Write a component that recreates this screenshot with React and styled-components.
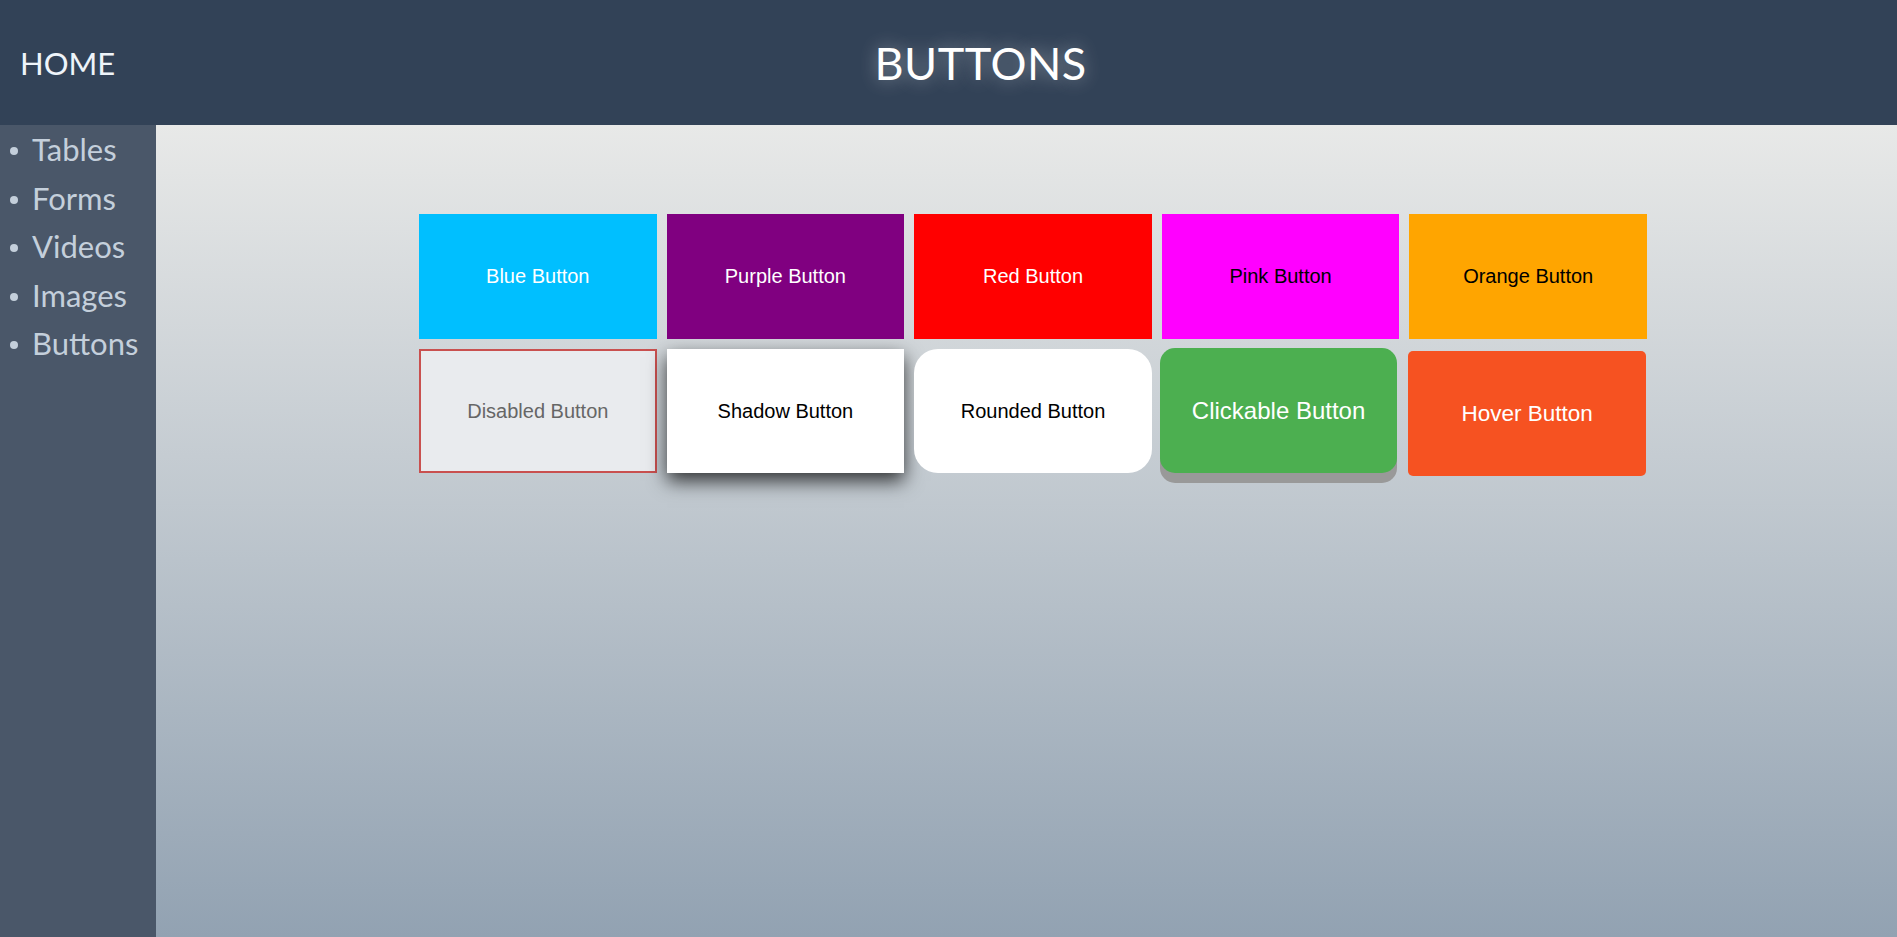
import styled, { createGlobalStyle } from "styled-components";

const GlobalStyle = createGlobalStyle`
  html, body {
    margin: 0;
    padding: 0;
  }
  body {
    font-family: "Trebuchet MS", Lato, "Open Sans", sans-serif;
  }
`;

const links = ["Tables", "Forms", "Videos", "Images", "Buttons"];

const buttons = [
  { label: "Blue Button", bg: "#00bfff", color: "#fff" },
  { label: "Purple Button", bg: "#800080", color: "#fff" },
  { label: "Red Button", bg: "#ff0000", color: "#fff" },
  { label: "Pink Button", bg: "#ff00ff", color: "#000" },
  { label: "Orange Button", bg: "#ffa500", color: "#000" },
];

export default function App() {
  return (
    <>
      <GlobalStyle />
      <Page>
        <Header>
          <HomeLink>HOME</HomeLink>
          <Title>BUTTONS</Title>
        </Header>
        <Body>
          <Sidebar>
            <NavList>
              {links.map((l) => (
                <NavItem key={l}>{l}</NavItem>
              ))}
            </NavList>
          </Sidebar>
          <Main>
            <ButtonGrid>
              {buttons.map((b) => (
                <PlainButton key={b.label} $bg={b.bg} $color={b.color}>
                  {b.label}
                </PlainButton>
              ))}
              <DisabledButton disabled>Disabled Button</DisabledButton>
              <ShadowButton>Shadow Button</ShadowButton>
              <RoundedButton>Rounded Button</RoundedButton>
              <ClickableButton>Clickable Button</ClickableButton>
              <HoverButton>Hover Button</HoverButton>
            </ButtonGrid>
          </Main>
        </Body>
      </Page>
    </>
  );
}

const Page = styled.div`
  display: flex;
  flex-direction: column;
  min-height: 100vh;
`;

const Header = styled.header`
  height: 125px;
  background: #324257;
  display: flex;
  align-items: center;
  color: #fff;
`;

const HomeLink = styled.a`
  padding-left: 20px;
  font-size: 31px;
  color: #eef4fa;
  text-decoration: none;
`;

const Title = styled.h1`
  flex: 1;
  margin: 0;
  padding-right: 51px;
  text-align: center;
  font-weight: normal;
  font-size: 45px;
  letter-spacing: 0.5px;
  color: #fff;
  text-shadow: 0 0 18px rgba(255, 255, 255, 0.45);
`;

const Body = styled.div`
  flex: 1;
  display: flex;
`;

const Sidebar = styled.nav`
  width: 156px;
  flex-shrink: 0;
  background: #4a5769;
`;

const NavList = styled.ul`
  margin: 0;
  padding: 0 0 0 10px;
  list-style: none;
  color: #c4cfdb;
`;

const NavItem = styled.li`
  display: flex;
  align-items: center;
  gap: 14px;
  font-size: 31px;
  line-height: 48.5px;

  &::before {
    content: "";
    width: 8px;
    height: 8px;
    margin-top: 4px;
    border-radius: 50%;
    background: #c4cfdb;
  }
`;

const Main = styled.main`
  flex: 1;
  background: linear-gradient(to bottom, #e8e9e8, #92a2b2);
  padding: 89px 0 0 263px;
`;

const ButtonGrid = styled.div`
  display: grid;
  grid-template-columns: repeat(5, 237.6px);
  grid-auto-rows: 125px;
  gap: 10px;
`;

const BaseButton = styled.button`
  border: none;
  margin: 0;
  padding: 0;
  width: 100%;
  height: 100%;
  font-family: "Liberation Sans", Arial, sans-serif;
  font-size: 20px;
  cursor: pointer;
`;

const PlainButton = styled(BaseButton)`
  background: ${(p) => p.$bg};
  color: ${(p) => p.$color};
`;

const DisabledButton = styled(BaseButton)`
  height: 124px;
  background: #e9ebee;
  color: #666;
  border: 2px solid #c9504f;
  cursor: not-allowed;
`;

const ShadowButton = styled(BaseButton)`
  height: 124px;
  background: #fff;
  color: #000;
  box-shadow: 0 8px 18px rgba(0, 0, 0, 0.75);
`;

const RoundedButton = styled(BaseButton)`
  height: 124px;
  background: #fff;
  color: #000;
  border-radius: 24px;
`;

const ClickableButton = styled(BaseButton)`
  height: 125px;
  margin-top: -1px;
  margin-left: -2px;
  background: #4caf50;
  color: #fff;
  font-size: 24px;
  border-radius: 15px;
  box-shadow: 0 10px #999;
`;

const HoverButton = styled(BaseButton)`
  height: 125px;
  margin-top: 2px;
  margin-left: -1px;
  background: #f65221;
  color: #fff;
  font-size: 22.5px;
  border-radius: 5px;
`;
